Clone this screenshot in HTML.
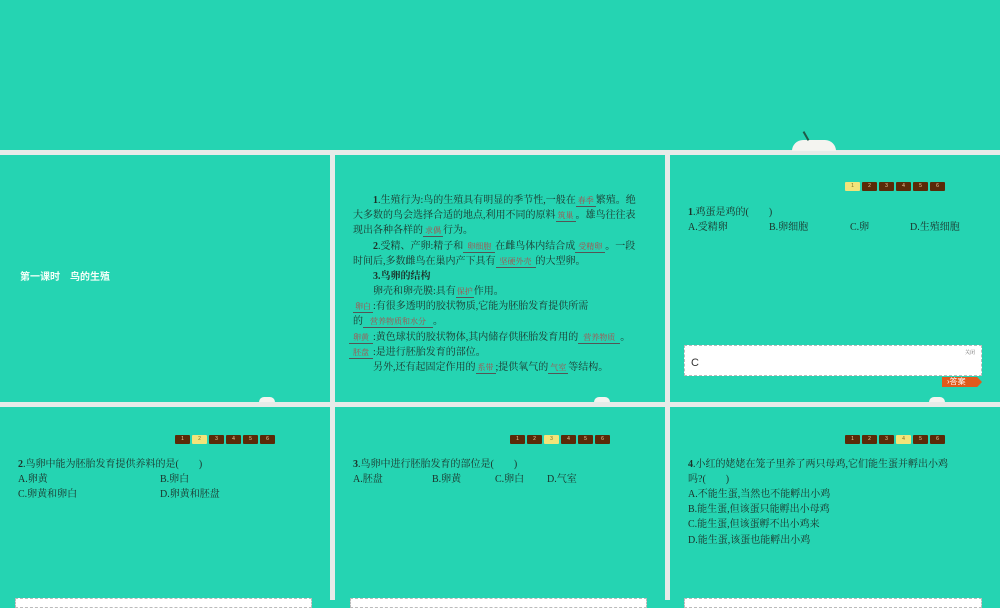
<!DOCTYPE html>
<html><head><meta charset="utf-8"><style>
*{margin:0;padding:0;box-sizing:border-box}
body{width:1000px;height:600px;background:#25d4b2;position:relative;overflow:hidden;font-family:"Liberation Serif","Noto Serif CJK SC","Noto Sans CJK SC",serif;color:#1c3028;font-size:10px}
.h{position:absolute;left:0;width:1000px;height:5px;background:#e6ebe8}
.v{position:absolute;width:5px;background:#e6ebe8}
.a{position:absolute;white-space:nowrap;line-height:15px}
.u{display:inline-block;border-bottom:1px solid #555;color:#b04a4a;font-size:8px;text-align:center;line-height:11px}
.nav{position:absolute;display:flex;gap:2px}
.nav span{width:15px;height:9px;background:#5a2a08;color:#f0d0a0;font-size:5px;text-align:center;line-height:9px;border-radius:1px;font-family:"Liberation Sans",sans-serif}
.nav span.on{background:#f2e47a;color:#7a6a20}
.egg{position:absolute;width:40px;height:14px;border-radius:20px 20px 0 0;background:#f4f4f0}
.box{position:absolute;background:#fff;border:1px dashed #bbb}
</style></head><body>
<div class="h" style="top:150px"></div>
<div class="h" style="top:402px"></div>
<div class="v" style="left:330px;top:150px;height:450px"></div>
<div class="v" style="left:665px;top:150px;height:450px"></div>
<div class="egg" style="left:792px;top:140px;width:44px;height:11px"></div>
<div style="position:absolute;left:805px;top:131px;width:2px;height:10px;background:#1f5a48;transform:rotate(-30deg)"></div>
<div class="egg" style="left:259px;top:397px;width:16px;height:5px"></div>
<div class="egg" style="left:594px;top:397px;width:16px;height:5px"></div>
<div class="egg" style="left:929px;top:397px;width:16px;height:5px"></div>

<div class="a" style="left:20px;top:270px;font-family:'Liberation Sans','Noto Sans CJK SC',sans-serif;font-weight:bold;color:#f4fff8">第一课时　鸟的生殖</div>

<div class="a" style="left:373px;top:193px"><b>1</b>.生殖行为:鸟的生殖具有明显的季节性,一般在<span class="u" style="width:20px">春季</span>繁殖。绝</div>
<div class="a" style="left:353px;top:208px">大多数的鸟会选择合适的地点,利用不同的原料<span class="u" style="width:20px">筑巢</span>。雄鸟往往表</div>
<div class="a" style="left:353px;top:223px">现出各种各样的<span class="u" style="width:20px">求偶</span>行为。</div>
<div class="a" style="left:373px;top:239px"><b>2</b>.受精、产卵:精子和<span class="u" style="width:32px">卵细胞</span>在雌鸟体内结合成<span class="u" style="width:30px">受精卵</span>。一段</div>
<div class="a" style="left:353px;top:254px">时间后,多数雌鸟在巢内产下具有<span class="u" style="width:40px">坚硬外壳</span>的大型卵。</div>
<div class="a" style="left:373px;top:269px;font-weight:bold">3.鸟卵的结构</div>
<div class="a" style="left:373px;top:284px">卵壳和卵壳膜:具有<span class="u" style="width:18px">保护</span>作用。</div>
<div class="a" style="left:353px;top:299px"><span class="u" style="width:20px">卵白</span>:有很多透明的胶状物质,它能为胚胎发育提供所需</div>
<div class="a" style="left:353px;top:314px">的<span class="u" style="width:70px">营养物质和水分</span>。</div>
<div class="a" style="left:349px;top:330px"><span class="u" style="width:24px">卵黄</span>:黄色球状的胶状物体,其内储存供胚胎发育用的<span class="u" style="width:42px">营养物质</span>。</div>
<div class="a" style="left:349px;top:345px"><span class="u" style="width:24px">胚盘</span>:是进行胚胎发育的部位。</div>
<div class="a" style="left:373px;top:360px">另外,还有起固定作用的<span class="u" style="width:20px">系带</span>;提供氧气的<span class="u" style="width:20px">气室</span>等结构。</div>

<div class="nav" style="left:845px;top:182px"><span class="on">1</span><span>2</span><span>3</span><span>4</span><span>5</span><span>6</span></div>
<div class="a" style="left:688px;top:205px"><b>1</b>.鸡蛋是鸡的(　　)</div>
<div class="a" style="left:688px;top:220px">A.受精卵</div>
<div class="a" style="left:769px;top:220px">B.卵细胞</div>
<div class="a" style="left:850px;top:220px">C.卵</div>
<div class="a" style="left:910px;top:220px">D.生殖细胞</div>
<div class="box" style="left:684px;top:345px;width:298px;height:31px"></div>
<div class="a" style="left:691px;top:356px;font-family:'Liberation Sans',sans-serif;font-size:11px;color:#333">C</div>
<div class="a" style="left:965px;top:346px;font-size:5px;color:#666">关闭</div>
<div style="position:absolute;left:942px;top:377px;width:40px;height:10px;background:#e05a1c;clip-path:polygon(0 0,88% 0,100% 50%,88% 100%,0 100%);color:#fff;font-size:8px;line-height:10px;padding-left:5px;font-family:'Liberation Sans','Noto Sans CJK SC',sans-serif">›答案</div>

<div class="nav" style="left:175px;top:435px"><span>1</span><span class="on">2</span><span>3</span><span>4</span><span>5</span><span>6</span></div>
<div class="a" style="left:18px;top:457px"><b>2</b>.鸟卵中能为胚胎发育提供养料的是(　　)</div>
<div class="a" style="left:18px;top:472px">A.卵黄</div>
<div class="a" style="left:160px;top:472px">B.卵白</div>
<div class="a" style="left:18px;top:487px">C.卵黄和卵白</div>
<div class="a" style="left:160px;top:487px">D.卵黄和胚盘</div>
<div class="box" style="left:15px;top:598px;width:297px;height:10px"></div>

<div class="nav" style="left:510px;top:435px"><span>1</span><span>2</span><span class="on">3</span><span>4</span><span>5</span><span>6</span></div>
<div class="a" style="left:353px;top:457px"><b>3</b>.鸟卵中进行胚胎发育的部位是(　　)</div>
<div class="a" style="left:353px;top:472px">A.胚盘</div>
<div class="a" style="left:432px;top:472px">B.卵黄</div>
<div class="a" style="left:495px;top:472px">C.卵白</div>
<div class="a" style="left:547px;top:472px">D.气室</div>
<div class="box" style="left:350px;top:598px;width:297px;height:10px"></div>

<div class="nav" style="left:845px;top:435px"><span>1</span><span>2</span><span>3</span><span class="on">4</span><span>5</span><span>6</span></div>
<div class="a" style="left:688px;top:457px"><b>4</b>.小红的姥姥在笼子里养了两只母鸡,它们能生蛋并孵出小鸡</div>
<div class="a" style="left:688px;top:472px">吗?(　　)</div>
<div class="a" style="left:688px;top:487px">A.不能生蛋,当然也不能孵出小鸡</div>
<div class="a" style="left:688px;top:502px">B.能生蛋,但该蛋只能孵出小母鸡</div>
<div class="a" style="left:688px;top:517px">C.能生蛋,但该蛋孵不出小鸡来</div>
<div class="a" style="left:688px;top:533px">D.能生蛋,该蛋也能孵出小鸡</div>
<div class="box" style="left:684px;top:598px;width:298px;height:10px"></div>
</body></html>
